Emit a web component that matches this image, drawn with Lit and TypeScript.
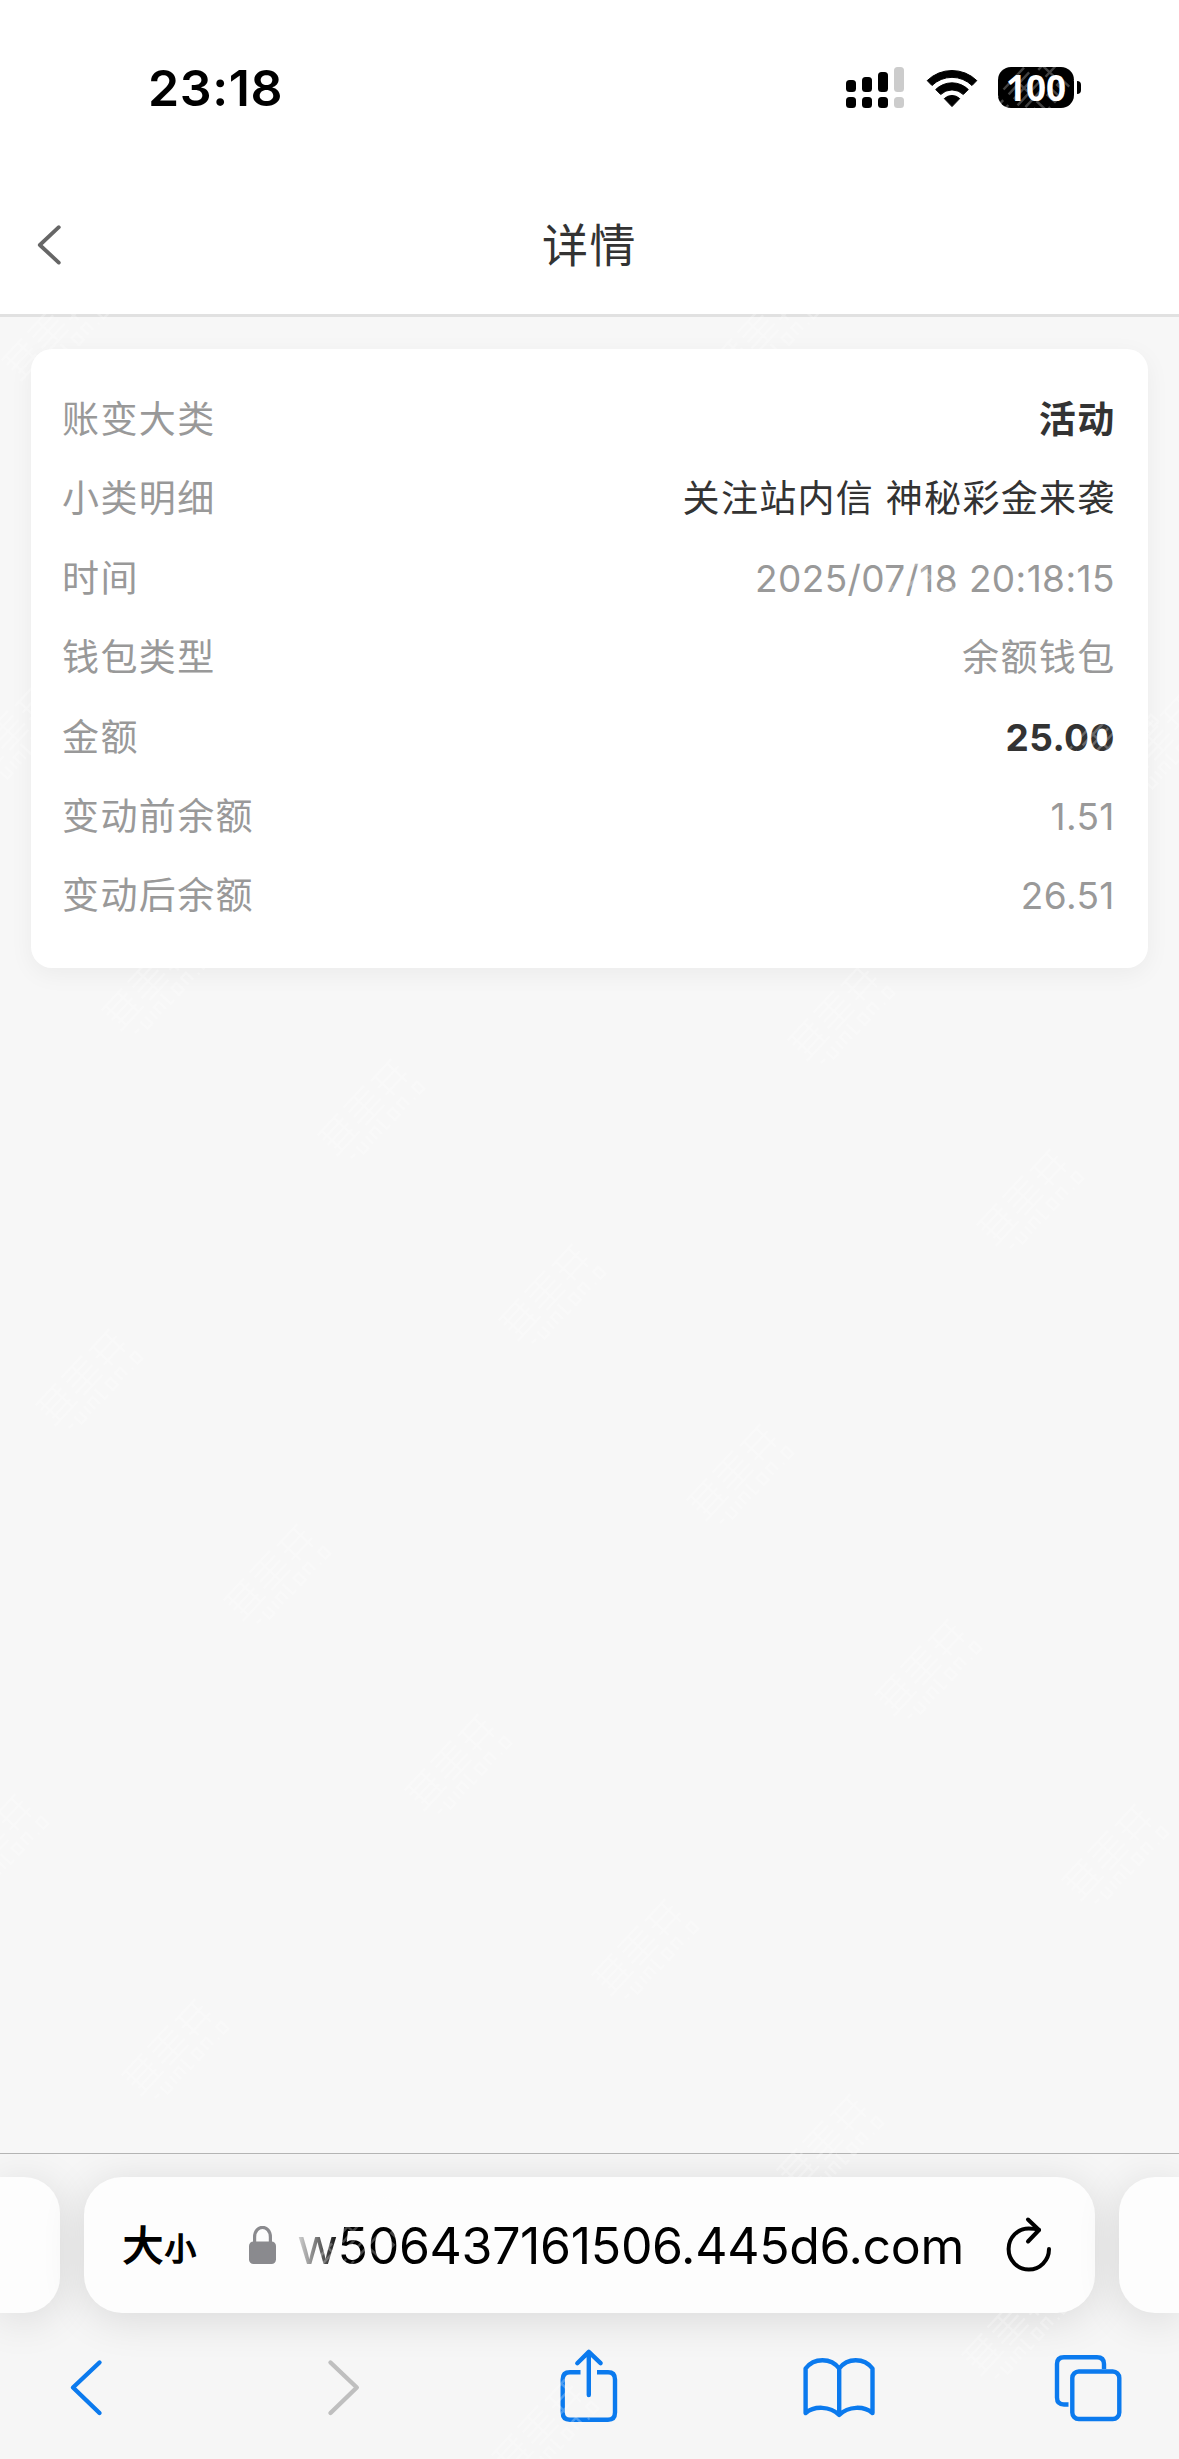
import { LitElement, html, css, svg } from "lit";
import { customElement } from "lit/decorators.js";
import { classMap } from "lit/directives/class-map.js";

interface Row {
  label: string;
  value: string;
  tone: "strong" | "dark" | "muted";
  numeric?: boolean;
}

const rows: Row[] = [
  { label: "账变大类", value: "活动", tone: "strong" },
  { label: "小类明细", value: "关注站内信 神秘彩金来袭", tone: "dark" },
  { label: "时间", value: "2025/07/18 20:18:15", tone: "muted", numeric: true },
  { label: "钱包类型", value: "余额钱包", tone: "muted" },
  { label: "金额", value: "25.00", tone: "strong", numeric: true },
  { label: "变动前余额", value: "1.51", tone: "muted", numeric: true },
  { label: "变动后余额", value: "26.51", tone: "muted", numeric: true },
];

@customElement("status-bar")
class StatusBar extends LitElement {
  static styles = css`
    :host { display: flex; height: 176px; box-sizing: border-box; padding: 63px 98px 0 148px; justify-content: space-between; align-items: flex-start; }
    .time { font: 600 50px/50px Inter, sans-serif; color: #000; letter-spacing: 0.6px; }
    .right { display: flex; align-items: flex-start; padding-top: 4px; }
    .signal { width: 58px; height: 41px; margin-right: 22px; }
    .wifi { width: 52px; height: 41px; margin: 1px 20px 0 0; }
    .battery { width: 76px; height: 41px; border-radius: 13px; background: #000; color: #fff; display: flex; align-items: center; justify-content: center; font: 700 35px/41px "Open Sans", sans-serif; }
    .nub { width: 4px; height: 13px; margin: 14px 0 0 3px; border-radius: 0 5px 5px 0; background: #000; }
  `;
  render() {
    return html`
      <div class="time">23:18</div>
      <div class="right">
        <svg class="signal" viewBox="0 0 58 41">
          <rect x="0" y="13" width="10" height="12" rx="3.5" />
          <rect x="16" y="10" width="10" height="15" rx="3.5" />
          <rect x="32" y="5" width="10" height="20" rx="3.5" />
          <rect x="48" y="0" width="10" height="25" rx="3.5" fill="#ccc" />
          <rect x="0" y="30" width="10" height="11" rx="3.5" />
          <rect x="16" y="30" width="10" height="11" rx="3.5" />
          <rect x="32" y="30" width="10" height="11" rx="3.5" />
          <rect x="48" y="30" width="10" height="11" rx="3.5" fill="#ccc" />
        </svg>
        <svg class="wifi" viewBox="0 0 52 41">
          <path d="M1.2 12.6 A35.5 35.5 0 0 1 50.8 12.6 L46 17.5 A28.6 28.6 0 0 0 6 17.5 Z" stroke="#000" stroke-width="1" stroke-linejoin="round" />
          <path d="M9.7 21.5 A23.3 23.3 0 0 1 42.3 21.5 L37.3 26.5 A16.2 16.2 0 0 0 14.7 26.5 Z" stroke="#000" stroke-width="1" stroke-linejoin="round" />
          <path d="M18.3 30.6 A11 11 0 0 1 33.7 30.6 L26 38.6 Z" stroke="#000" stroke-width="1" stroke-linejoin="round" />
        </svg>
        <div class="battery">100</div>
        <div class="nub"></div>
      </div>
    `;
  }
}

@customElement("page-header")
class PageHeader extends LitElement {
  static styles = css`
    :host { display: grid; grid-template-columns: 100px 1fr 100px; align-items: center; height: 141px; box-sizing: border-box; border-bottom: 3px solid #e1e1e1; background: #fff; }
    .back { width: 24px; height: 40px; margin-left: 37px; }
    .title { text-align: center; padding-bottom: 6px; font: 400 46px/60px "Noto Sans CJK SC", sans-serif; letter-spacing: 1.4px; color: #333; }
  `;
  render() {
    return html`
      <svg class="back" viewBox="0 0 24 40" fill="none" stroke="#666" stroke-width="3.8" stroke-linecap="round" stroke-linejoin="round">
        <path d="M21.8 2.2 L2.8 20 L21.8 37.6" />
      </svg>
      <div class="title">详情</div>
    `;
  }
}

@customElement("detail-card")
class DetailCard extends LitElement {
  static styles = css`
    :host { display: block; margin: 32px 31px 0; height: 619px; box-sizing: border-box; padding: 31px 32px 0 31px; background: #fff; border-radius: 21px; box-shadow: 0 6px 24px rgba(0, 0, 0, 0.05); }
    .row { display: flex; justify-content: space-between; align-items: center; height: 79.4px; font: 400 37px/79.4px Inter, "Noto Sans CJK SC", sans-serif; letter-spacing: 1.4px; color: #999; }
    .value { margin-right: 0.4px; }
    .numeric { letter-spacing: 0.4px; margin-right: 1.2px; }
    .dark { color: #333; letter-spacing: 1.3px; }
    .strong { color: #333; font-weight: 700; }
  `;
  render() {
    return rows.map(
      (r) => html`<div class="row">
        <span class="label">${r.label}</span>
        <span class=${classMap({ value: true, numeric: !!r.numeric, dark: r.tone === "dark", strong: r.tone === "strong" })}>${r.value}</span>
      </div>`,
    );
  }
}

@customElement("address-bar")
class AddressBar extends LitElement {
  static styles = css`
    :host { display: grid; grid-template-columns: 60px 1011px 60px; gap: 24px; height: 136px; }
    .pill { background: #fdfdfd; box-shadow: 0 6px 44px rgba(0, 0, 0, 0.12); }
    .prev { border-radius: 0 36px 36px 0; }
    .next { border-radius: 36px 0 0 36px; }
    .main { border-radius: 38px; display: flex; align-items: center; padding: 0 43px 0 39px; }
    .size { display: flex; align-items: baseline; width: 126px; font-family: "Noto Sans CJK SC", sans-serif; font-weight: 400; color: #000; line-height: 60px; -webkit-text-stroke: 1.7px #000; stroke-linejoin: round; }
    .big { font-size: 40px; }
    .small { font-size: 31px; margin-left: 2px; }
    .lock { width: 27px; height: 38px; margin: 0 21px 0 0; }
    .url { flex: 1; white-space: nowrap; font: 400 50px/60px Inter, sans-serif; color: #000; letter-spacing: -0.32px; padding-top: 1px; -webkit-mask-image: linear-gradient(90deg, rgba(0, 0, 0, 0.15), #000 44px); mask-image: linear-gradient(90deg, rgba(0, 0, 0, 0.15), #000 44px); }
    .reload { width: 46px; height: 56px; margin-bottom: 2px; }
  `;
  render() {
    return html`
      <div class="pill prev"></div>
      <div class="pill main">
        <div class="size"><span class="big">大</span><span class="small">小</span></div>
        <svg class="lock" viewBox="0 0 27 38">
          <rect x="0" y="15.5" width="27" height="22.5" rx="4.5" fill="#8a8a8e" />
          <path d="M5.6 17 V11 C5.6 -1.8 21.4 -1.8 21.4 11 V17" fill="none" stroke="#8a8a8e" stroke-width="3.2" />
        </svg>
        <div class="url">w506437161506.445d6.com</div>
        <svg class="reload" viewBox="0 0 46 56" fill="none" stroke="#000" stroke-width="4" stroke-linecap="round" stroke-linejoin="round">
          <path d="M43 33 A20.2 20.6 0 1 1 22.8 12.4 C26.5 12.4 30 12.8 33 13.8" />
          <path d="M22 3.5 L33 14 L22 25.5" />
        </svg>
      </div>
      <div class="pill next"></div>
    `;
  }
}

const toolIcons = [
  svg`<path d="M48.5 15.5 L22 40.5 L48.5 66" />`,
  svg`<path d="M29.5 15.5 L55.8 40.5 L29.5 66" stroke="#bfbfbf" />`,
  svg`<path d="M29.5 25.3 H19 Q11.7 25.3 11.7 32.5 V65.5 Q11.7 72.7 19 72.7 H57 Q64 72.7 64 65.5 V32.5 Q64 25.3 57 25.3 H46" stroke-linecap="butt" /><path d="M37.8 5.5 V48 M26.3 16.2 L37.8 4.9 L49.6 16.2" />`,
  svg`<path d="M4.6 66 V21.5 C13 10.5 30 10.5 38.2 21.5 C46.5 10.5 63 10.5 71.5 21.5 V66 C63 58.8 47.5 58.8 38.2 68 C29 58.8 13 58.8 4.6 66 Z M38.2 21.5 V66" />`,
  svg`<path d="M16.5 57.5 H12 Q5 57.5 5 50.5 V17 Q5 10.2 12 10.2 H45 Q52 10.2 52 17 V22" stroke-linecap="butt" /><rect x="20.3" y="24.5" width="47" height="47.5" rx="6.5" />`,
];

@customElement("tool-bar")
class ToolBar extends LitElement {
  static styles = css`
    :host { display: flex; justify-content: space-between; padding: 34px 53.5px 0 50.5px; }
    .tool { width: 74px; height: 80px; fill: none; stroke: #0b7aee; stroke-width: 4.4; stroke-linecap: round; stroke-linejoin: round; overflow: visible; }
  `;
  render() {
    return toolIcons.map((icon) => html`<svg class="tool" viewBox="0 0 74 80">${icon}</svg>`);
  }
}

/* Centres of the faint diagonal marks laid over the page. */
const marks = [
  [1036, 87], [60, 330], [770, 330], [20, 730], [1165, 740], [905, 605], [1110, 738],
  [160, 980], [846, 1010], [376, 1105], [1035, 1195], [557, 1290], [94, 1375], [745, 1470],
  [282, 1570], [933, 1665], [463, 1760], [1120, 1850], [0, 1840], [650, 1945], [180, 2045],
  [835, 2140], [370, 2235], [1020, 2325], [550, 2425], [90, 2510],
];

@customElement("page-marks")
class PageMarks extends LitElement {
  static styles = css`
    :host { position: absolute; inset: 0; overflow: hidden; pointer-events: none; }
    .layer { width: 100%; height: 100%; display: block; }
  `;
  render() {
    return html`<svg class="layer" viewBox="0 0 1179 2459" fill="none" stroke="#fff" stroke-opacity="0.26" stroke-width="2.4">
      ${marks.map(
        ([x, y]) => svg`<g transform="translate(${x} ${y}) rotate(-47)">
          <path d="M-62 -22 h30 M-62 -15 h30 M-62 -8 h30 M-60 -1 h26 M-64 6 h34 M-56 -22 v28 M-38 -22 v28 M-24 -22 h30 M-24 -15 h30 M-24 -8 h30 M-26 -1 h34 M-22 6 h28 M-9 -22 v28 M14 -20 h30 M14 -10 h30 M14 0 h30 M20 -20 v27 M38 -20 v27" />
          <path d="M-56 18 h6 M-44 14 v10 h7 v-10 M-30 14 v10 M-24 24 v-10 h7 v10 M-10 10 v14 h5 M2 14 h7 v10 h-7 z M16 24 v-10 h7 v10 M30 24 h2 M38 14 h7 v10 h-7 z" />
        </g>`,
      )}
    </svg>`;
  }
}

@customElement("app-root")
class AppRoot extends LitElement {
  static styles = css`
    :host { display: flex; flex-direction: column; position: relative; width: 1179px; height: 2459px; overflow: hidden; background: #fff; }
    .content { flex: 1; background: #f7f7f7; display: flow-root; }
    .browser { height: 306px; box-sizing: border-box; border-top: 1px solid #b4b4b4; padding-top: 23px; background: #f6f6f6; overflow: hidden; }
  `;
  render() {
    return html`
      <status-bar></status-bar>
      <page-header></page-header>
      <main class="content"><detail-card></detail-card></main>
      <footer class="browser">
        <address-bar></address-bar>
        <tool-bar></tool-bar>
      </footer>
      <page-marks></page-marks>
    `;
  }
}
